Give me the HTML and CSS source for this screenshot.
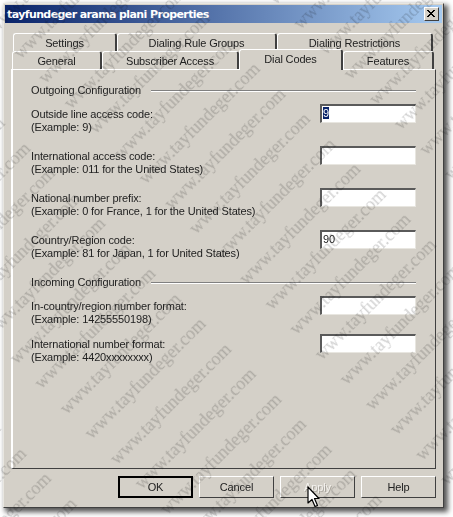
FILE: index.html
```html
<!DOCTYPE html>
<html lang="en">
<head>
  <meta charset="UTF-8" />
  <title>tayfundeger arama plani Properties</title>
  <link rel="stylesheet" href="styles.css">
</head>
<body>
  <div class="dialog">
    <div class="titlebar">
      <span class="title">tayfundeger arama plani Properties</span>
      <button class="close" aria-label="Close">
        <svg width="9" height="8" viewBox="0 0 9 8"><path d="M1 0 L8 7 M0 0 L7 7 M7 0 L0 7 M8 0 L1 7" stroke="#000" stroke-width="1" fill="none"/></svg>
      </button>
    </div>

    <div class="tabs">
      <div class="tab-row back">
        <div class="tab t-settings">Settings</div>
        <div class="tab t-rules">Dialing Rule Groups</div>
        <div class="tab t-restrict">Dialing Restrictions</div>
      </div>
      <div class="tab-row front">
        <div class="tab t-general">General</div>
        <div class="tab t-subscriber">Subscriber Access</div>
        <div class="tab t-dial active">Dial Codes</div>
        <div class="tab t-features">Features</div>
      </div>
    </div>

    <div class="panel">
      <div class="group-head">Outgoing Configuration</div>
      <div class="field">
        <div class="label">Outside line access code:<br>(Example: 9)</div>
        <div class="input"><span class="sel">9</span></div>
      </div>
      <div class="field">
        <div class="label">International access code:<br>(Example: 011 for the United States)</div>
        <div class="input"></div>
      </div>
      <div class="field">
        <div class="label">National number prefix:<br>(Example: 0 for France, 1 for the United States)</div>
        <div class="input"></div>
      </div>
      <div class="field">
        <div class="label">Country/Region code:<br>(Example: 81 for Japan, 1 for United States)</div>
        <div class="input">90</div>
      </div>
      <div class="group-head second">Incoming Configuration</div>
      <div class="field">
        <div class="label">In-country/region number format:<br>(Example: 14255550198)</div>
        <div class="input"></div>
      </div>
      <div class="field tight">
        <div class="label">International number format:<br>(Example: 4420xxxxxxxx)</div>
        <div class="input"></div>
      </div>
    </div>

    <div class="buttons">
      <button class="btn default">OK</button>
      <button class="btn">Cancel</button>
      <button class="btn disabled">Apply</button>
      <button class="btn">Help</button>
    </div>
  </div>

  <div class="watermark">
    <div class="marks">
      <div>www.tayfundeger.com www.tayfundeger.com www.tayfundeger.com www.tayfundeger.com www.tayfundeger.com</div>
      <div>www.tayfundeger.com www.tayfundeger.com www.tayfundeger.com www.tayfundeger.com www.tayfundeger.com</div>
      <div>www.tayfundeger.com www.tayfundeger.com www.tayfundeger.com www.tayfundeger.com www.tayfundeger.com</div>
      <div>www.tayfundeger.com www.tayfundeger.com www.tayfundeger.com www.tayfundeger.com www.tayfundeger.com</div>
      <div>www.tayfundeger.com www.tayfundeger.com www.tayfundeger.com www.tayfundeger.com www.tayfundeger.com</div>
      <div>www.tayfundeger.com www.tayfundeger.com www.tayfundeger.com www.tayfundeger.com www.tayfundeger.com</div>
      <div>www.tayfundeger.com www.tayfundeger.com www.tayfundeger.com www.tayfundeger.com www.tayfundeger.com</div>
      <div>www.tayfundeger.com www.tayfundeger.com www.tayfundeger.com www.tayfundeger.com www.tayfundeger.com</div>
      <div>www.tayfundeger.com www.tayfundeger.com www.tayfundeger.com www.tayfundeger.com www.tayfundeger.com</div>
      <div>www.tayfundeger.com www.tayfundeger.com www.tayfundeger.com www.tayfundeger.com www.tayfundeger.com</div>
      <div>www.tayfundeger.com www.tayfundeger.com www.tayfundeger.com www.tayfundeger.com www.tayfundeger.com</div>
      <div>www.tayfundeger.com www.tayfundeger.com www.tayfundeger.com www.tayfundeger.com www.tayfundeger.com</div>
      <div>www.tayfundeger.com www.tayfundeger.com www.tayfundeger.com www.tayfundeger.com www.tayfundeger.com</div>
      <div>www.tayfundeger.com www.tayfundeger.com www.tayfundeger.com www.tayfundeger.com www.tayfundeger.com</div>
      <div>www.tayfundeger.com www.tayfundeger.com www.tayfundeger.com www.tayfundeger.com www.tayfundeger.com</div>
      <div>www.tayfundeger.com www.tayfundeger.com www.tayfundeger.com www.tayfundeger.com www.tayfundeger.com</div>
      <div>www.tayfundeger.com www.tayfundeger.com www.tayfundeger.com www.tayfundeger.com www.tayfundeger.com</div>
      <div>www.tayfundeger.com www.tayfundeger.com www.tayfundeger.com www.tayfundeger.com www.tayfundeger.com</div>
      <div>www.tayfundeger.com www.tayfundeger.com www.tayfundeger.com www.tayfundeger.com www.tayfundeger.com</div>
      <div>www.tayfundeger.com www.tayfundeger.com www.tayfundeger.com www.tayfundeger.com www.tayfundeger.com</div>
    </div>
  </div>

  <svg class="cursor" width="13" height="22" viewBox="0 0 13 22">
    <path d="M1 1 L1 17 L5 13.5 L8 20.5 L10.5 19.5 L7.5 12.5 L12 12.5 Z" fill="#fff" stroke="#000" stroke-width="1.2" stroke-linejoin="round"/>
  </svg>
</body>
</html>
```

FILE: styles.css
```css
html, body {
  margin: 0;
  padding: 0;
  height: 517px;
  overflow: hidden;
  background: #fff;
}
body {
  position: relative;
  padding: 3px 0 0 3px;
  box-sizing: border-box;
  font-family: "Liberation Sans", Arial, sans-serif;
  font-size: 11px;
  letter-spacing: -0.14px;
  color: #222;
}
.dialog {
  width: 441px;
  height: 505px;
  box-sizing: border-box;
  background: #d4d0c8;
  border: 1px solid;
  border-color: #e8e6e0 #404040 #404040 #e8e6e0;
  padding: 1px;
  box-shadow: 3px 3px 5px 1px #555;
  filter: blur(0.3px);
}
.titlebar {
  height: 18px;
  display: flex;
  align-items: center;
  justify-content: space-between;
  padding: 0 3px 0 2px;
  background: linear-gradient(90deg, #0a246a, #a6caf0);
  color: #fff;
}
.title {
  font-family: "DejaVu Sans", sans-serif;
  font-weight: bold;
  font-size: 11px;
  letter-spacing: -0.6px;
}
.close {
  width: 15px;
  height: 14px;
  padding: 0;
  display: flex;
  align-items: center;
  justify-content: center;
  background: #d4d0c8;
  border: 1px solid;
  border-color: #fff #404040 #404040 #fff;
}

/* tabs */
.tabs {
  margin: 10px 0 0 6px;
}
.tab-row {
  display: flex;
  height: 18px;
}
.tab-row.back {
  padding-left: 2px;
}
.tab {
  box-sizing: border-box;
  height: 18px;
  display: flex;
  align-items: center;
  justify-content: center;
  background: #d4d0c8;
  border: 1px solid;
  border-color: #fff #404040 transparent #fff;
  border-right-width: 2px;
  border-bottom: 0;
  border-radius: 3px 3px 0 0;
}
.t-settings { width: 104px; }
.t-rules { width: 160px; }
.t-restrict { width: 156px; }
.t-general { width: 90px; margin-left: 1px; }
.t-subscriber { width: 137px; }
.t-dial { width: 104px; }
.t-features { width: 91px; }
.tab.active {
  height: 21px;
  margin-top: -2px;
  padding-bottom: 2px;
  position: relative;
  z-index: 2;
}

/* page */
.panel {
  box-sizing: border-box;
  width: 425px;
  height: 400px;
  margin-left: 6px;
  padding: 14px 19px 0 18px;
  border: 1px solid;
  border-color: #fff #404040 #404040 #fff;
  border-left-width: 2px;
  border-top-width: 1px;
}
.group-head {
  display: flex;
  align-items: center;
  gap: 10px;
  height: 13px;
  line-height: 13px;
}
.group-head::after {
  content: "";
  flex: 1;
  height: 0;
  border-top: 1px solid #808080;
  border-bottom: 1px solid #fff;
}
.group-head.second {
  margin-top: 11px;
}
.field {
  display: flex;
  justify-content: space-between;
  align-items: flex-start;
  margin-top: 11px;
  height: 31px;
}
.field.tight {
  margin-top: 7px;
}
.label {
  line-height: 13px;
}
.input {
  box-sizing: border-box;
  width: 96px;
  height: 19px;
  margin-top: -4px;
  padding: 1px 1px;
  line-height: 13px;
  background: #fff;
  border: 1px solid;
  border-color: #5a5a5a #e8e6e0 #e8e6e0 #5a5a5a;
  border-top-width: 2px;
  border-left-width: 2px;
}
.sel {
  background: #0a246a;
  color: #fff;
}

/* bottom buttons */
.buttons {
  display: flex;
  justify-content: flex-end;
  gap: 6px;
  margin: 7px 6px 0 0;
}
.btn {
  box-sizing: border-box;
  width: 75px;
  height: 22px;
  padding: 0;
  font: inherit;
  letter-spacing: inherit;
  color: inherit;
  background: #d4d0c8;
  border: 1px solid;
  border-color: #fff #404040 #404040 #fff;
}
.btn.default {
  border: 2px solid #000;
}
.btn.disabled {
  color: #f4f2ee;
  text-shadow: 1px 1px 0 #a8a49c;
}

/* diagonal site watermark over the whole shot */
.watermark {
  position: absolute;
  inset: 0;
  overflow: hidden;
  pointer-events: none;
  mix-blend-mode: multiply;
}
.marks {
  position: absolute;
  left: 0;
  top: 0;
  transform-origin: 0 0;
  transform: rotate(-45deg) translate(-465px, -2px);
  font-family: "Liberation Serif", serif;
  font-size: 18px;
  letter-spacing: 0;
  line-height: 35.5px;
  white-space: nowrap;
  word-spacing: 51.5px;
  color: #d2d2d2;
  filter: blur(0.3px);
}
.cursor {
  position: absolute;
  left: 307px;
  top: 486px;
}
```
